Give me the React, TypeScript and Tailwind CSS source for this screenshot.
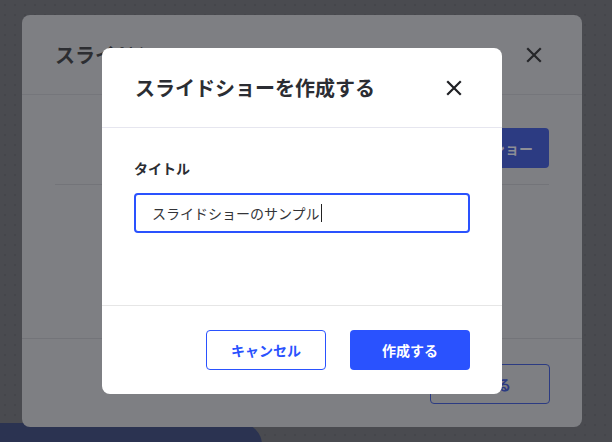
import React from "react";

const XIcon = ({ className }: { className?: string }) => (
  <svg viewBox="0 0 24 24" className={className} fill="none" stroke="currentColor" strokeWidth={2.2} strokeLinecap="square">
    <path d="M6 6 L18 18 M18 6 L6 18" />
  </svg>
);

export default function App() {
  const font = { fontFamily: '"Noto Sans CJK JP", "Noto Sans", sans-serif' };
  return (
    <div
      className="relative w-[612px] h-[442px] overflow-hidden bg-[#4a4b50] bg-[radial-gradient(circle,_#45464b_1px,_transparent_1.3px)] bg-[length:10px_10px]"
      style={font}
    >
      {/* underlying page element peeking at bottom-left */}
      <div className="absolute left-0 top-[423px] w-[262px] h-[40px] bg-[#2b3351] rounded-tr-[22px]" />

      {/* dimmed back modal */}
      <div className="absolute left-[22px] top-[15px] w-[560px] h-[412px] rounded-[8px] bg-[#7e7f83] flex flex-col">
        <div className="h-[80px] flex items-center justify-between pl-[33px] pr-[36px] border-b border-[#75767b]">
          <span className="text-[20px] font-bold text-[#2c2d31] leading-none">スライドショー</span>
          <XIcon className="w-[24px] h-[24px] text-[#252629]" />
        </div>
        <div className="flex-1 px-[33px] pt-[33px]">
          <div className="flex justify-end">
            <div className="h-[40px] px-[16px] rounded-[4px] bg-[#2c3b82] flex items-center text-[14px] font-bold text-[#8d8e96]">
              新しいスライドショー
            </div>
          </div>
          <div className="mt-[16px] border-t border-[#737479]" />
        </div>
        <div className="h-[89px] border-t border-[#737479] flex justify-end items-start pt-[25px] pr-[32px]">
          <div className="w-[120px] h-[40px] rounded-[4px] border border-[#2c3b82] flex items-center justify-center text-[14px] font-bold text-[#2c3b82]">
            閉じる
          </div>
        </div>
      </div>

      {/* front modal */}
      <div className="absolute left-[102px] top-[48px] w-[400px] h-[346px] rounded-[8px] bg-white flex flex-col">
        <div className="h-[80px] flex items-center justify-between pl-[33px] pr-[36px] border-b border-[#e6e6ef]">
          <span className="text-[20px] font-bold text-[#2b2d33] leading-none">スライドショーを作成する</span>
          <XIcon className="w-[24px] h-[24px] text-[#1f2024]" />
        </div>
        <div className="flex-1 pl-[32px] pr-[32px] pt-[30px]">
          <div className="text-[14px] font-bold text-[#2b2d33] leading-[20px] mb-[15px]">タイトル</div>
          <div className="h-[40px] rounded-[4px] border-2 border-[#2a52fe] pl-[16px] flex items-center text-[14px] text-[#333438]">
            <span>スライドショーのサンプル</span>
            <span className="w-px h-[18px] bg-[#222] ml-px" />
          </div>
        </div>
        <div className="h-[89px] border-t border-[#e6e6e6] flex justify-end items-start gap-[24px] pt-[24px] pr-[32px]">
          <div className="w-[120px] h-[40px] rounded-[4px] border border-[#2a52fe] flex items-center justify-center text-[14px] font-bold text-[#2a52fe]">
            キャンセル
          </div>
          <div className="w-[120px] h-[40px] rounded-[4px] bg-[#2a52fe] flex items-center justify-center text-[14px] font-bold text-white">
            作成する
          </div>
        </div>
      </div>
    </div>
  );
}
